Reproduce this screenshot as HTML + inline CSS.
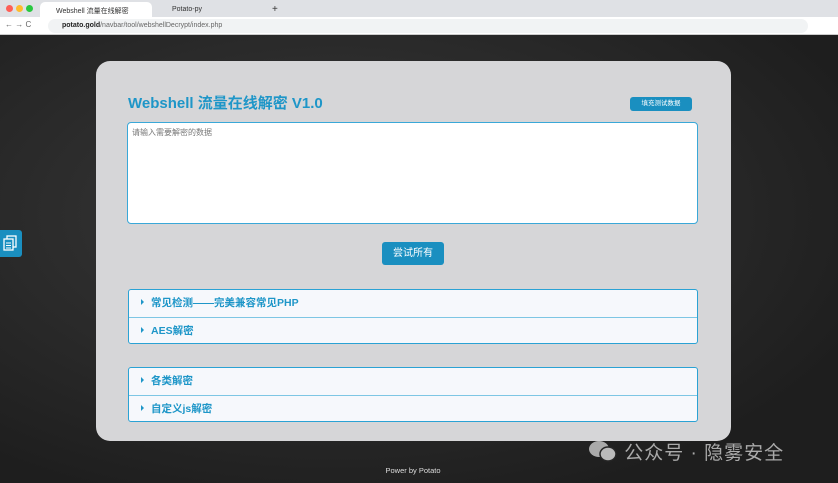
<!DOCTYPE html>
<html><head><meta charset="utf-8"><style>
*{box-sizing:border-box;margin:0;padding:0}
body{width:838px;height:483px;overflow:hidden;font-family:"Liberation Sans","Noto Sans CJK SC",sans-serif;background:#262626;position:relative}
.tabs{position:absolute;left:0;top:0;width:838px;height:17px;background:#dfe1e5}
.dot{position:absolute;top:5px;width:7px;height:7px;border-radius:50%}
.tab{position:absolute;top:2px;height:15px;font-size:7px;color:#333;padding:4px 0 0 16px}
.addr{position:absolute;left:0;top:17px;width:838px;height:18px;background:#fff;border-bottom:1px solid #ccc}
.url{position:absolute;left:48px;top:2px;width:760px;height:14px;background:#f1f3f4;border-radius:7px;font-size:7px;color:#666;padding:3px 0 0 14px}
.bg{position:absolute;left:0;top:35px;width:838px;height:448px;background:radial-gradient(ellipse at 40% 40%,#3a3a3a,#1e1e1e 80%)}
.card{position:absolute;left:96px;top:61px;width:635px;height:380px;background:#d6d6d8;border-radius:14px}
h1{position:absolute;left:128px;top:92px;font-size:15px;color:#1e96c8;font-weight:bold}
.fill{position:absolute;left:630px;top:97px;width:62px;height:14px;background:#1a8fc0;border-radius:3px;color:#fff;font-size:6.5px;text-align:center;line-height:14px}
.ta{position:absolute;left:127px;top:122px;width:571px;height:102px;background:#fff;border:1.5px solid #3aa8d8;border-radius:4px;font-size:8px;color:#777;padding:4px 4px}
.btn{position:absolute;left:382px;top:242px;width:62px;height:23px;background:#1a8fc0;border-radius:3px;color:#fff;font-size:10px;text-align:center;line-height:23px}
.acc{position:absolute;left:128px;width:570px;height:55px;background:#f6f8fc;border:1px solid #2aa2d4;border-radius:3px}
.row{height:27px;font-size:10.5px;font-weight:bold;color:#1e96c8;padding:5px 0 0 22px;position:relative}
.row:before{content:"";position:absolute;left:12px;top:9px;border-left:3px solid #1e96c8;border-top:3px solid transparent;border-bottom:3px solid transparent}
.row+.row{border-top:1.5px solid #7dc6e4}
.side{position:absolute;left:0;top:230px;width:22px;height:27px;background:#1a8fc0;border-radius:0 3px 3px 0}
.foot{position:absolute;left:0;width:826px;top:466px;text-align:center;font-size:7.5px;color:#ddd}
.wm{position:absolute;left:588px;top:438px;font-size:19px;color:#aaa;letter-spacing:1px}
</style></head><body>
<div class="tabs">
<div class="dot" style="left:6px;background:#fe5f57"></div><div class="dot" style="left:16px;background:#febc2e"></div><div class="dot" style="left:26px;background:#28c840"></div>
<div class="tab" style="left:40px;width:112px;background:#fff;border-radius:5px 5px 0 0">Webshell 流量在线解密</div>
<div class="tab" style="left:156px;width:110px">Potato-py</div>
<div class="tab" style="left:268px;padding-left:4px;font-size:10px;top:0">+</div>
</div>
<div class="addr"><span style="position:absolute;left:5px;top:3px;font-size:8px;color:#666">←  →  C</span><div class="url"><b style="color:#222">potato.gold</b>/navbar/tool/webshellDecrypt/index.php</div></div>
<div class="bg"></div>
<div class="card"></div>
<h1>Webshell 流量在线解密 V1.0</h1>
<div class="fill">填充测试数据</div>
<div class="ta">请输入需要解密的数据</div>
<div class="btn">尝试所有</div>
<div class="acc" style="top:289px"><div class="row">常见检测——完美兼容常见PHP</div><div class="row">AES解密</div></div>
<div class="acc" style="top:367px"><div class="row">各类解密</div><div class="row">自定义js解密</div></div>
<div class="side"><svg width="22" height="27" viewBox="0 0 22 27"><rect x="7" y="6" width="9" height="11" fill="none" stroke="#fff" stroke-width="1.3"/><rect x="4" y="9" width="9" height="11" fill="#1a8fc0" stroke="#fff" stroke-width="1.3"/><path d="M6 13h5M6 15.5h5M6 18h5" stroke="#fff"/></svg></div>
<div class="foot">Power by Potato</div>
<div class="wm"><svg width="30" height="22" viewBox="0 0 30 22" style="vertical-align:-3px"><ellipse cx="11" cy="9" rx="10" ry="8" fill="#aaa"/><ellipse cx="20" cy="14" rx="8" ry="7" fill="#bbb" stroke="#262626" stroke-width="1.5"/></svg> 公众号 · 隐雾安全</div>
</body></html>
